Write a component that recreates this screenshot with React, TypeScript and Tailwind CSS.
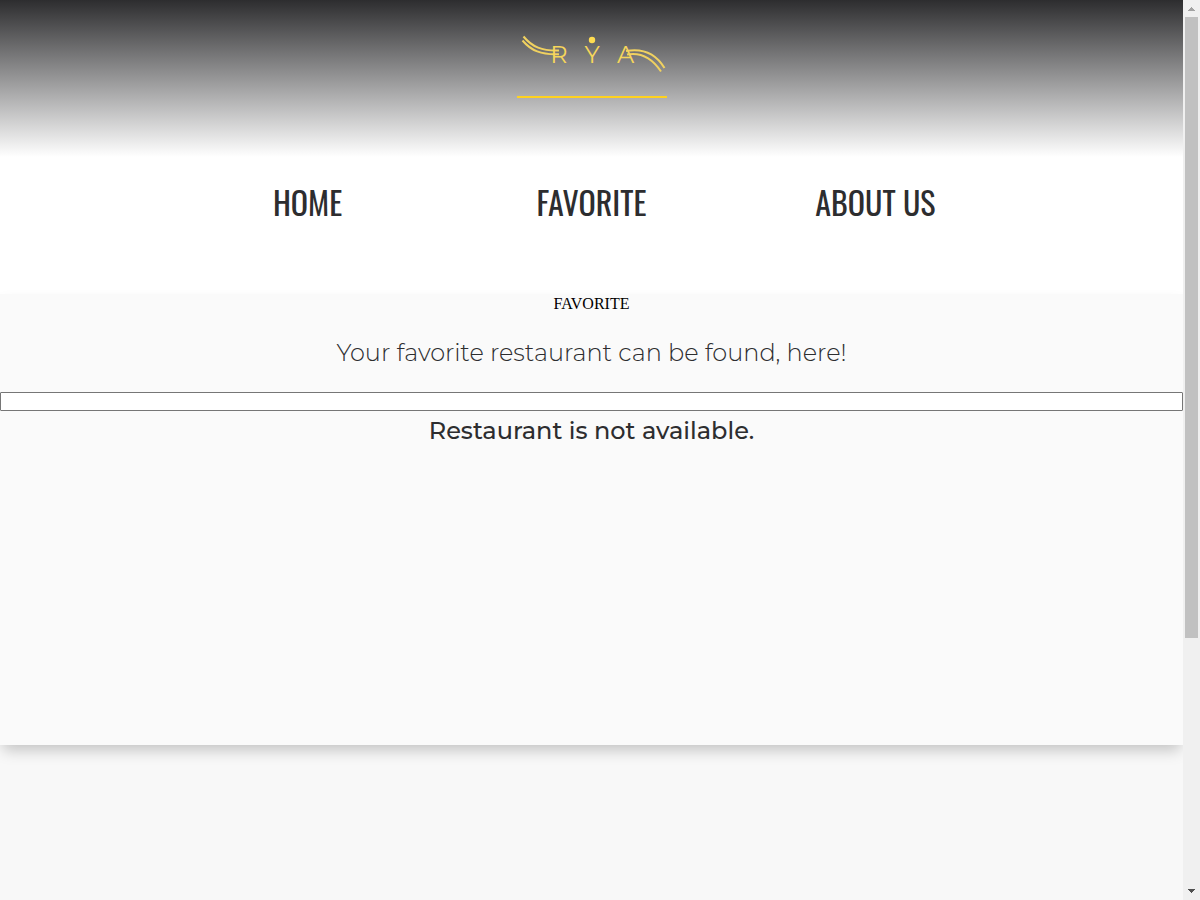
const links = [
  { label: "HOME", href: "#home" },
  { label: "FAVORITE", href: "#favorite" },
  { label: "ABOUT US", href: "#about" },
];

function Logo() {
  return (
    <svg
      viewBox="0 0 150 60"
      className="h-[60px] w-[150px]"
      role="img"
      aria-label="RYA"
      fill="none"
      stroke="#f0d160"
      strokeWidth="2"
    >
      <path d="M6.500 14.500 C15 25 25 29 42 28.500" />
      <path d="M5.500 18.500 C14 28.500 24 33 42 32.200" />
      <path d="M109 29 C126 26 139 32 147.500 46" />
      <path d="M110 32.500 C124 30 135 36 144 49.500" />
      <circle cx="75" cy="18" r="3.200" fill="#ffdc50" stroke="none" />
      <g
        fill="#f6d65b"
        stroke="none"
        fontSize="24"
        className="font-['Montserrat','Lato',sans-serif] font-normal"
        textAnchor="middle"
      >
        <text x="42" y="40.500">R</text>
        <text x="75" y="40.500">Y</text>
        <text x="108.500" y="40.500">A</text>
      </g>
    </svg>
  );
}

function ScrollTrack() {
  return (
    <div aria-hidden="true" className="flex w-[17px] shrink-0 flex-col items-center bg-[#f0f0f0]">
      <svg viewBox="0 0 17 17" className="h-[17px] w-[17px] shrink-0" shapeRendering="crispEdges">
        <path d="M5 11V10H6V9H7V8H8V7H9V8H10V9H11V10H12V11Z" fill="#a3a3a3" />
      </svg>
      <div className="flex w-full flex-1 flex-col px-0.5">
        <div className="h-[71.700%] bg-[#c1c1c1]" />
      </div>
      <svg viewBox="0 0 17 17" className="h-[17px] w-[17px] shrink-0" shapeRendering="crispEdges">
        <path d="M5 6V7H6V8H7V9H8V10H9V9H10V8H11V7H12V6Z" fill="#505050" />
      </svg>
    </div>
  );
}

export default function App() {
  return (
    <div className="flex min-h-screen bg-[#f8f8f8]">
      <div className="min-w-0 flex-1 overflow-hidden">
        <header className="flex h-[157px] flex-col items-center bg-linear-to-b/srgb from-[#2d2d2f] to-white pt-[22px]">
          <a href="#home" className="border-b-2 border-[#ffd21f] pb-3.5">
            <Logo />
          </a>
        </header>
        <nav className="flex h-[137px] justify-center bg-white pt-[22px]">
          <ul className="grid w-[72%] grid-cols-3 text-center">
            {links.map((link) => (
              <li key={link.label}>
                <a
                  href={link.href}
                  className="whitespace-nowrap font-['Oswald','Roboto',sans-serif] text-[32px] leading-[46px] text-[#2d2d2f]"
                >
                  {link.label}
                </a>
              </li>
            ))}
          </ul>
        </nav>
        <main className="flex h-[451px] flex-col bg-[#fafafa] text-center shadow-[0_8px_14px_-3px_rgba(0,0,0,0.22)]">
          <h1 className="font-['Liberation_Serif',serif] text-base leading-5 text-black">FAVORITE</h1>
          <label
            htmlFor="search"
            className="pt-[23px] pb-[23px] font-['Montserrat','Inter',sans-serif] text-2xl font-light leading-8 text-[#2d2d2f]"
          >
            Your favorite restaurant can be found, here!
          </label>
          <input
            id="search"
            type="text"
            className="h-[19px] w-full shrink-0 rounded-[1px] border border-[#767676] bg-white px-0.5 text-[13px] outline-none"
          />
          <p className="pt-1 font-['Montserrat','Inter',sans-serif] text-2xl font-medium leading-8 text-[#2d2d2f]">
            Restaurant is not available.
          </p>
        </main>
      </div>
      <ScrollTrack />
    </div>
  );
}
